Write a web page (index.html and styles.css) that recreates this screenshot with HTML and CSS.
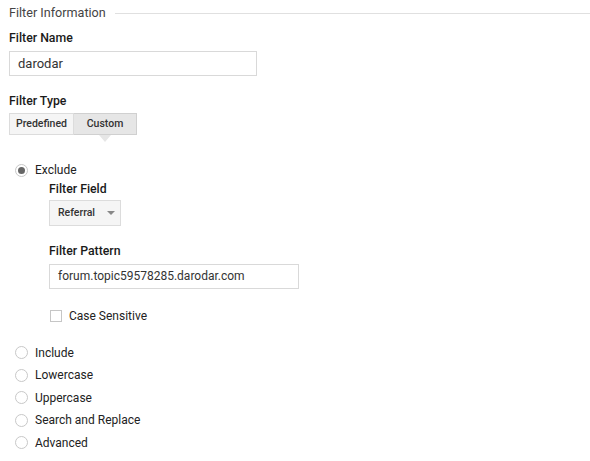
FILE: index.html
```html
<!DOCTYPE html>
<html lang="en">
<head>
    <meta charset="UTF-8">
    <title>Filter Information</title>
    <link rel="stylesheet" href="styles.css">
</head>
<body>
    <div class="section-head">
        <span class="section-title">Filter Information</span>
        <span class="section-line"></span>
    </div>

    <div class="label">Filter Name</div>
    <div class="textbox name-box">darodar</div>

    <div class="label type-label">Filter Type</div>
    <div class="btn-group">
        <span class="seg">Predefined</span>
        <span class="seg seg-active">Custom</span>
    </div>

    <div class="radios">
        <div class="radio-row">
            <span class="radio radio-on"></span>
            <span>Exclude</span>
        </div>
        <div class="sub">
            <div class="label">Filter Field</div>
            <div class="dropdown">Referral <span class="caret"></span></div>

            <div class="label pattern-label">Filter Pattern</div>
            <div class="textbox pattern-box">forum.topic59578285.darodar.com</div>

            <div class="check-row">
                <span class="checkbox"></span>
                <span>Case Sensitive</span>
            </div>
        </div>

        <div class="options">
            <div class="radio-row"><span class="radio"></span><span>Include</span></div>
            <div class="radio-row"><span class="radio"></span><span>Lowercase</span></div>
            <div class="radio-row"><span class="radio"></span><span>Uppercase</span></div>
            <div class="radio-row"><span class="radio"></span><span>Search and Replace</span></div>
            <div class="radio-row"><span class="radio"></span><span>Advanced</span></div>
        </div>
    </div>
</body>
</html>
```

FILE: styles.css
```css
body {
    margin: 0;
    padding: 4px 0 0 9px;
    font-family: Roboto, Arial, sans-serif;
    font-size: 12px;
    color: #222;
    background: #fff;
}
.section-head {
    display: flex;
    align-items: center;
    height: 16px;
}
.section-title {
    font-size: 12.6px;
    color: #444;
}
.section-line {
    flex: 1;
    height: 1px;
    background: #e0e0e0;
    margin-left: 9px;
    margin-top: 2px;
}
.label {
    font-weight: 500;
    font-size: 12.3px;
    color: #1a1a1a;
    margin-top: 11px;
    height: 15px;
}
.textbox {
    box-sizing: border-box;
    border: 1px solid #d9d9d9;
    height: 25px;
    line-height: 23px;
    padding-left: 8px;
    color: #333;
}
.name-box {
    width: 248px;
    margin-top: 5px;
    font-size: 13px;
}
.type-label {
    margin-top: 18px;
}
.btn-group {
    display: flex;
    margin-top: 4px;
    height: 22px;
}
.seg {
    position: relative;
    box-sizing: border-box;
    font-size: 10.5px;
    font-weight: 500;
    color: #333;
    background: #f5f5f5;
    border: 1px solid #dcdcdc;
    line-height: 20px;
    width: 65px;
    text-align: center;
}
.seg-active {
    background: #e6e6e6;
    border-color: #d0d0d0;
    border-left: none;
    width: 63px;
}
.seg-active::after {
    content: "";
    position: absolute;
    left: 25px;
    top: 21px;
    border-left: 6px solid transparent;
    border-right: 6px solid transparent;
    border-top: 7px solid #e6e6e6;
}
.radios {
    margin-top: 24px;
}
.radio-row {
    display: flex;
    align-items: center;
    height: 22.5px;
}
.radio {
    box-sizing: border-box;
    width: 13px;
    height: 13px;
    border: 1px solid #c8c8c8;
    border-radius: 50%;
    margin: 0 7px 0 6px;
    display: flex;
    align-items: center;
    justify-content: center;
}
.radio-on::after {
    content: "";
    width: 7px;
    height: 7px;
    border-radius: 50%;
    background: #666;
}
.sub {
    padding-left: 40px;
}
.sub .label:first-child {
    margin-top: 0;
}
.dropdown {
    box-sizing: border-box;
    display: flex;
    align-items: center;
    width: 72px;
    height: 26px;
    margin-top: 3px;
    padding-left: 8px;
    background: #f5f5f5;
    border: 1px solid #dcdcdc;
    font-size: 10.5px;
    font-weight: 500;
    color: #333;
}
.caret {
    margin-left: 12px;
    border-left: 4px solid transparent;
    border-right: 4px solid transparent;
    border-top: 4px solid #888;
}
.pattern-label {
    margin-top: 18px;
}
.pattern-box {
    width: 250px;
    margin-top: 5px;
}
.check-row {
    display: flex;
    align-items: center;
    margin-top: 20px;
}
.checkbox {
    box-sizing: border-box;
    width: 12px;
    height: 12px;
    border: 1px solid #c6c6c6;
    margin: 0 7px 0 1px;
}
.options {
    margin-top: 19px;
}
```
